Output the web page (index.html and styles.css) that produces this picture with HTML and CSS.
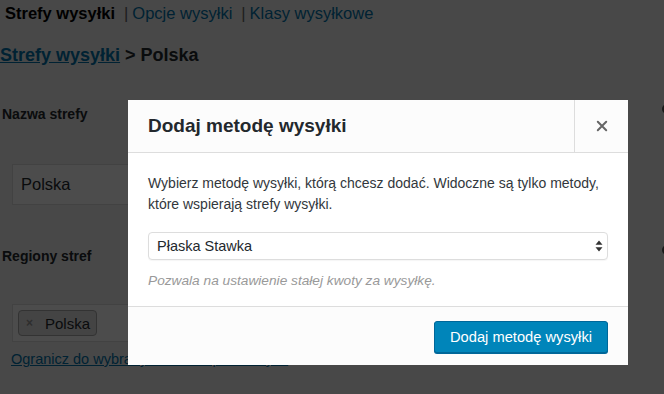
FILE: index.html
```html
<!DOCTYPE html>
<html lang="pl">
<head>
  <meta charset="UTF-8">
  <title>Strefy wysyłki</title>
  <link rel="stylesheet" href="styles.css">
</head>
<body>
  <div class="page">
    <ul class="subsubsub">
      <li class="current">Strefy wysyłki</li>
      <li><span class="sep">|</span><a href="#">Opcje wysyłki</a></li>
      <li><span class="sep">|</span><a href="#">Klasy wysyłkowe</a></li>
    </ul>

    <h2 class="crumbs"><a href="#">Strefy wysyłki</a> &gt; Polska</h2>

    <div class="field">
      <label class="field-label">Nazwa strefy</label>
      <span class="help-tip"></span>
      <input class="text-input" type="text" value="Polska">
    </div>

    <div class="field">
      <label class="field-label">Regiony stref</label>
      <span class="help-tip"></span>
      <div class="tag-input">
        <span class="tag"><span class="tag-x">×</span>Polska</span>
      </div>
      <a class="limit-link" href="#">Ogranicz do wybranych kodów pocztowych</a>
    </div>
  </div>

  <div class="backdrop"></div>

  <div class="modal">
    <header class="modal-header">
      <h1>Dodaj metodę wysyłki</h1>
      <button class="modal-close" type="button">
        <svg width="12" height="12" viewBox="0 0 12 12"><path d="M1.8 1.8 L10.2 10.2 M10.2 1.8 L1.8 10.2" stroke="#666" stroke-width="2" stroke-linecap="round"/></svg>
      </button>
    </header>
    <div class="modal-body">
      <p>Wybierz metodę wysyłki, którą chcesz dodać. Widoczne są tylko metody, które wspierają strefy wysyłki.</p>
      <div class="select-wrap">
        <select class="method-select">
          <option>Płaska Stawka</option>
        </select>
        <svg class="select-arrows" width="8" height="12" viewBox="0 0 8 12"><path d="M4 0.5 L7.5 4.8 H0.5 Z M4 11.5 L7.5 7.2 H0.5 Z" fill="#333"/></svg>
      </div>
      <div class="method-desc">Pozwala na ustawienie stałej kwoty za wysyłkę.</div>
    </div>
    <footer class="modal-footer">
      <button class="button-primary" type="button">Dodaj metodę wysyłki</button>
    </footer>
  </div>
</body>
</html>
```

FILE: styles.css
```css
:root {
  --text-color: #23282d;
  --link-color: #0073aa;
  --border-color: #ddd;
  --muted: #999;
  --primary: #0085ba;
}

body {
  margin: 0;
  background: #f1f1f1;
  color: var(--text-color);
  font-family: "Liberation Sans", Arial, sans-serif;
  font-size: 14px;
  overflow: hidden;
}

a {
  color: var(--link-color);
}

/* strona pod modalem */
.page {
  padding: 0 0 0 2px;
  width: 672px;
}

.subsubsub {
  list-style: none;
  margin: 0;
  padding: 4px 0 0 3px;
  display: flex;
  font-size: 16.5px;
  line-height: 18px;
}

.subsubsub li.current {
  font-weight: bold;
  color: #000;
}

.subsubsub a {
  text-decoration: none;
}

.subsubsub .sep {
  color: #666;
  margin: 0 4px 0 9px;
}

.crumbs {
  margin: 22px 0 0 -2px;
  font-size: 18px;
  line-height: 22px;
}

.field {
  position: relative;
}

.field-label {
  display: block;
  font-weight: bold;
  font-size: 14px;
  margin-top: 39px;
  line-height: 18px;
}

.help-tip {
  position: absolute;
  right: 2px;
  top: -1px;
  width: 10px;
  height: 10px;
  border-radius: 50%;
  background: #555;
}

.field + .field .help-tip {
  top: -2px;
}

.text-input {
  display: block;
  box-sizing: border-box;
  margin: 41px 0 0 10px;
  width: 300px;
  height: 41px;
  padding: 0 8px;
  border: 1px solid var(--border-color);
  background: #fff;
  font: 16.5px "Liberation Sans", Arial, sans-serif;
  color: var(--text-color);
}

.field + .field .field-label {
  margin-top: 42px;
}

.tag-input {
  box-sizing: border-box;
  margin: 39px 0 0 10px;
  width: 300px;
  height: 38px;
  padding: 5px;
  border: 1px solid var(--border-color);
  background: #fff;
}

.tag {
  display: inline-flex;
  align-items: center;
  height: 26px;
  box-sizing: border-box;
  padding: 0 6px 0 7px;
  border: 1px solid #aaa;
  border-radius: 4px;
  background: #e4e4e4;
  font-size: 15px;
}

.tag-x {
  color: #999;
  font-weight: bold;
  font-size: 12px;
  margin-right: 12px;
}

.limit-link {
  display: inline-block;
  margin: 9px 0 0 9px;
  font-size: 14.5px;
}

/* przyciemnienie */
.backdrop {
  position: fixed;
  inset: 0;
  background: #000;
  opacity: 0.7;
}

/* modal */
.modal {
  position: absolute;
  left: 128px;
  top: 100px;
  width: 500px;
  background: #fff;
}

.modal-header {
  display: flex;
  align-items: stretch;
  height: 53px;
  box-sizing: border-box;
  background: #fcfcfc;
  border-bottom: 1px solid var(--border-color);
}

.modal-header h1 {
  flex: 1;
  margin: 0;
  padding: 0 20px;
  font-size: 19px;
  line-height: 52px;
  color: var(--text-color);
}

.modal-close {
  width: 54px;
  border: none;
  border-left: 1px solid var(--border-color);
  background: transparent;
  display: flex;
  align-items: center;
  justify-content: center;
  padding: 0;
}

.modal-body {
  padding: 20px 20px 17px;
}

.modal-body p {
  margin: 0;
  line-height: 21px;
  color: #32373c;
}

.select-wrap {
  position: relative;
  margin-top: 17px;
}

.method-select {
  display: block;
  width: 100%;
  height: 28px;
  box-sizing: border-box;
  appearance: none;
  -webkit-appearance: none;
  border: 1px solid var(--border-color);
  border-radius: 4px;
  background: #fff;
  padding: 0 8px;
  font: 14.5px "Liberation Sans", Arial, sans-serif;
  color: var(--text-color);
  box-shadow: 0 1px 1px rgba(0, 0, 0, 0.04);
}

.select-arrows {
  position: absolute;
  right: 5px;
  top: 8px;
}

.method-desc {
  margin-top: 12px;
  font-style: italic;
  color: var(--muted);
  font-size: 13.7px;
  line-height: 17px;
}

.modal-footer {
  display: flex;
  justify-content: flex-end;
  padding: 14px 20px 12px;
  background: #fcfcfc;
  border-top: 1px solid var(--border-color);
}

.button-primary {
  height: 32px;
  padding: 0 15px;
  background: var(--primary);
  border: 1px solid #006799;
  border-radius: 3px;
  color: #fff;
  font: 14.7px "Liberation Sans", Arial, sans-serif;
  box-shadow: 0 1px 0 #006799;
}
```
